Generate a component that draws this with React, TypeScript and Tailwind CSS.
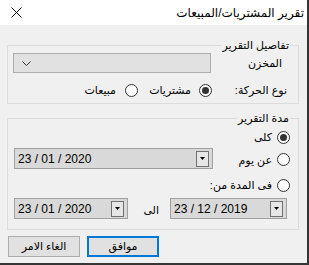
import React from "react";

const Radio = ({ checked }: { checked?: boolean }) => (
	<span className="flex h-[13px] w-[13px] shrink-0 items-center justify-center rounded-full border border-[#333333] bg-white">
		{checked && <span className="h-[7px] w-[7px] rounded-full bg-[#333333]" />}
	</span>
);

const DateBox = ({ value, className }: { value: string; className: string }) => (
	<div
		dir="ltr"
		className={`flex h-[21px] items-center border border-[#a0a0a0] bg-[#d9d9d9] pl-[3px] pr-[3px] ${className}`}
	>
		<span className="flex-1 text-[12px] leading-none text-black">{value}</span>
		<span className="flex h-[16px] w-[13px] items-center justify-center border border-[#707070] bg-[#e6e6e6]">
			<svg width="5" height="3" viewBox="0 0 5 3">
				<path d="M0 0h5L2.5 3z" fill="#000" />
			</svg>
		</span>
	</div>
);

export default function App() {
	return (
		<div className="h-[265px] w-[309px] bg-[#363636] font-['Liberation_Sans','DejaVu_Sans',sans-serif] text-[11px] text-black">
			<div dir="rtl" className="flex h-[263px] w-[307px] flex-col bg-[#f0f0f0]">
				{/* title bar */}
				<div className="flex h-[25px] items-center justify-between bg-white">
					<span className="pr-[3px] text-[12px] leading-none">تقرير المشتريات/المبيعات</span>
					<svg className="ml-[11px]" width="11" height="11" viewBox="0 0 11 11">
						<path d="M0.5 0.5l10 10M10.5 0.5l-10 10" stroke="#000" strokeWidth="1" />
					</svg>
				</div>

				{/* report details */}
				<fieldset className="ml-[7px] mr-[8px] mt-[14px] border border-[#dcdcdc] pb-[6px]">
					<legend className="mr-[8px] px-[1px] leading-[13px]">تفاصيل التقرير</legend>
					<div className="mt-[1px] flex h-[20px] items-center">
						<div className="w-[87px] pr-[16px]">المخزن</div>
						<div className="flex h-[20px] w-[198px] items-center justify-end border border-[#adadad] bg-[#e1e1e1] pl-[8px]">
							<svg width="9" height="5" viewBox="0 0 9 5">
								<path d="M0.5 0.5l4 4 4-4" stroke="#333" fill="none" />
							</svg>
						</div>
					</div>
					<div className="mt-[11px] flex h-[13px] items-center">
						<div className="w-[86px] pr-[11px]">نوع الحركة:</div>
						<div className="flex w-[74px] items-center gap-[8px]">
							<Radio checked />
							<span>مشتريات</span>
						</div>
						<div className="flex items-center gap-[9px]">
							<Radio />
							<span>مبيعات</span>
						</div>
					</div>
				</fieldset>

				{/* report period */}
				<fieldset className="ml-[7px] mr-[8px] mt-[8px] border border-[#dcdcdc] pb-[10px]">
					<legend className="mr-[8px] px-[1px] leading-[13px]">مدة التقرير</legend>
					<div className="mt-[6px] flex h-[13px] items-center gap-[5px] pr-[8px]">
						<Radio checked />
						<span>كلى</span>
					</div>
					<div className="mt-[4px] flex h-[21px] items-end justify-between pl-[6px] pr-[8px]">
						<div className="mb-[1px] flex items-center gap-[5px]">
							<Radio />
							<span>عن يوم</span>
						</div>
						<DateBox value="23 / 01 / 2020" className="w-[199px]" />
					</div>
					<div className="mt-[10px] flex h-[13px] items-center gap-[5px] pr-[8px]">
						<Radio />
						<span>فى المدة من:</span>
					</div>
					<div className="mt-[6px] flex h-[21px] items-center pr-[11px]">
						<DateBox value="23 / 12 / 2019" className="w-[117px]" />
						<span className="mr-[11px] mt-[4px] w-[31px]">الى</span>
						<DateBox value="23 / 01 / 2020" className="w-[114px]" />
					</div>
				</fieldset>

				{/* buttons */}
				<div dir="ltr" className="mt-[6px] flex gap-[7px] pl-[8px]">
					<button className="h-[21px] w-[72px] border border-[#adadad] bg-[#e1e1e1]">الغاء الامر</button>
					<button className="h-[21px] w-[72px] border-2 border-[#0078d7] bg-[#e1e1e1]">موافق</button>
				</div>
			</div>
		</div>
	);
}
